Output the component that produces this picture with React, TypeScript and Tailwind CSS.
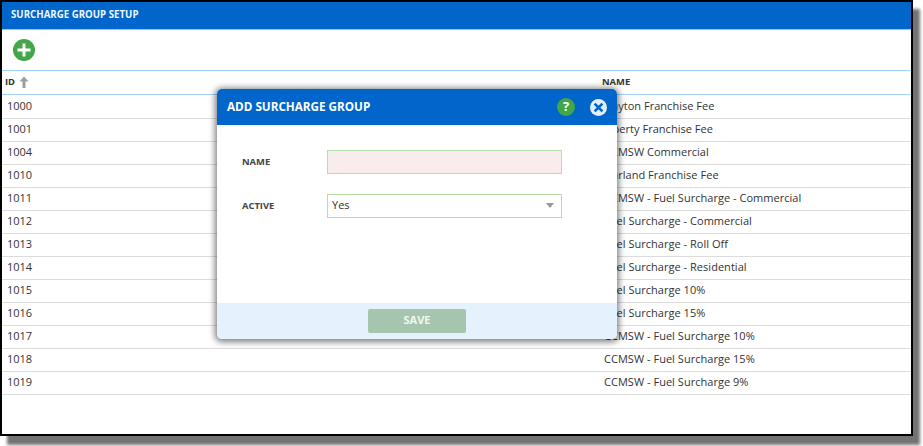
import React from 'react';

const ROWS: [string, string][] = [
  ['1000', 'Dayton Franchise Fee'],
  ['1001', 'Liberty Franchise Fee'],
  ['1004', 'CCMSW Commercial'],
  ['1010', 'Garland Franchise Fee'],
  ['1011', 'CCMSW - Fuel Surcharge - Commercial'],
  ['1012', 'Fuel Surcharge - Commercial'],
  ['1013', 'Fuel Surcharge - Roll Off'],
  ['1014', 'Fuel Surcharge - Residential'],
  ['1015', 'Fuel Surcharge 10%'],
  ['1016', 'Fuel Surcharge 15%'],
  ['1017', 'CCMSW - Fuel Surcharge 10%'],
  ['1018', 'CCMSW - Fuel Surcharge 15%'],
  ['1019', 'CCMSW - Fuel Surcharge 9%'],
];

const PlusIcon = () => (
  <svg width="22" height="22" viewBox="0 0 22 22">
    <circle cx="11" cy="11" r="11" fill="#43a648" />
    <path d="M11 4.5v13M4.5 11h13" stroke="#fff" strokeWidth="3" />
  </svg>
);

const UpArrow = () => (
  <svg width="10" height="12" viewBox="0 0 10 12">
    <path d="M5 0.5 L9.5 5.5 H6.5 V12 H3.5 V5.5 H0.5 Z" fill="#9e9e9e" />
  </svg>
);

const CloseIcon = () => (
  <svg width="17" height="17" viewBox="0 0 17 17">
    <circle cx="8.5" cy="8.5" r="8.5" fill="#e3f0fc" />
    <path d="M4.6 4.6l7.8 7.8M12.4 4.6l-7.8 7.8" stroke="#0066cc" strokeWidth="2.6" />
  </svg>
);

export default function App() {
  return (
    <div className="w-[923px] h-[446px] bg-white overflow-hidden font-['Open_Sans',sans-serif]">
      <div className="relative w-[913px] h-[436px] bg-white border-2 border-black shadow-[7px_9px_3px_rgba(0,0,0,0.55)]">
        <div className="h-[27px] bg-[#0066cc] border-b border-[#8cc6fb] box-content flex items-center pl-[9px] text-[9.7px] font-bold text-[#eef6fd]">
          SURCHARGE GROUP SETUP
        </div>
        <div className="h-[40px] flex items-center pl-[11px]">
          <PlusIcon />
        </div>
        <div className="h-[25px] mb-px border-y border-[#a3d3fb] flex items-center pb-px text-[9.4px] font-bold text-[#333]">
          <div className="w-[600px] pl-[3px] flex items-center gap-1">
            ID <UpArrow />
          </div>
          <div>NAME</div>
        </div>
        {ROWS.map(([id, name]) => (
          <div key={id} className="h-[23px] border-b border-[#dcdcdc] flex items-center pb-[2px] text-[11px] text-[#333]">
            <div className="w-[602px] pl-[5px]">{id}</div>
            <div className="tracking-[0.03px]">{name}</div>
          </div>
        ))}

        <div className="absolute left-[215px] top-[87px] w-[400px] h-[250px] rounded-[5px] bg-white overflow-hidden flex flex-col shadow-[0_1px_6px_2px_rgba(0,0,0,0.5)]">
          <div className="h-[36px] shrink-0 bg-[#0066cc] flex items-center pl-[10px] pr-[10px] text-white">
            <span className="text-[11.7px] font-bold flex-1">ADD SURCHARGE GROUP</span>
            <span className="w-[18px] h-[18px] rounded-full bg-[#43a648] flex items-center justify-center text-[13px] font-bold mr-[15px]">?</span>
            <CloseIcon />
          </div>
          <div className="flex-1 pt-[25px] pl-[25px]">
            <div className="flex items-center h-[24px] mb-[20px]">
              <label className="w-[85px] text-[9.4px] font-bold text-[#444]">NAME</label>
              <div className="w-[235px] h-[24px] bg-[#f9ecec] border border-[#b5dfa9]" />
            </div>
            <div className="flex items-center h-[24px]">
              <label className="w-[85px] text-[9.4px] font-bold text-[#444]">ACTIVE</label>
              <div className="w-[235px] h-[24px] border border-[#b5dfa9] flex items-center justify-between pl-[4px] pr-[7px] pb-px text-[11px] text-[#333]">
                Yes
                <span className="w-0 h-0 border-x-[4px] border-x-transparent border-t-[5px] border-t-[#999]" />
              </div>
            </div>
          </div>
          <div className="h-[36px] shrink-0 bg-[#e5f1fd] flex items-center justify-center">
            <button className="w-[98px] h-[24px] -mt-[1px] rounded-[2px] bg-[#a6c5ae] text-[11px] font-bold text-[#f1f7f2]">SAVE</button>
          </div>
        </div>
      </div>
    </div>
  );
}
